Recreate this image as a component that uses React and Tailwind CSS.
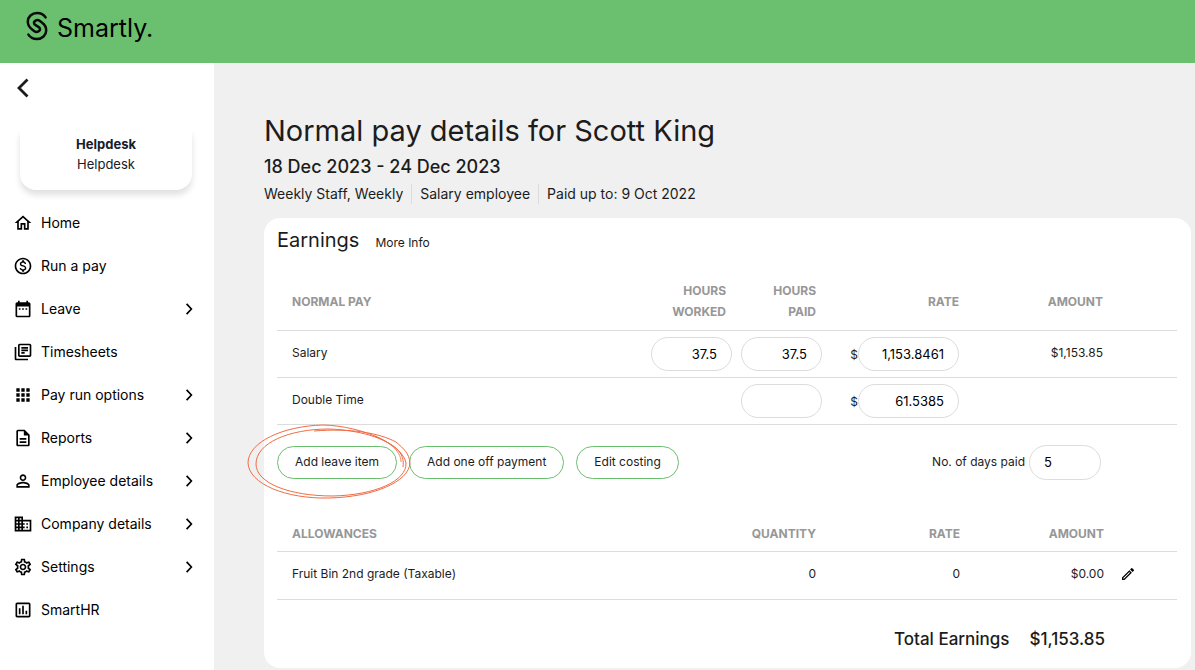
import React, { useState } from 'react'
import {
    MdOutlineHome,
    MdOutlineMonetizationOn,
    MdDateRange,
    MdOutlineLibraryBooks,
    MdApps,
    MdOutlineDescription,
    MdPersonOutline,
    MdDomain,
    MdOutlineSettings,
    MdOutlineAssessment,
    MdOutlineModeEdit,
} from 'react-icons/md'

const menu = [
    { label: 'Home', icon: MdOutlineHome },
    { label: 'Run a pay', icon: MdOutlineMonetizationOn },
    { label: 'Leave', icon: MdDateRange, sub: true },
    { label: 'Timesheets', icon: MdOutlineLibraryBooks },
    { label: 'Pay run options', icon: MdApps, sub: true },
    { label: 'Reports', icon: MdOutlineDescription, sub: true },
    { label: 'Employee details', icon: MdPersonOutline, sub: true },
    { label: 'Company details', icon: MdDomain, sub: true },
    { label: 'Settings', icon: MdOutlineSettings, sub: true },
    { label: 'SmartHR', icon: MdOutlineAssessment },
]

const Logo = () => (
    <svg className="h-8 w-6" viewBox="0 0 24 32" fill="none" stroke="#0a0a0a" strokeWidth="2.5" strokeLinecap="round" strokeLinejoin="round">
        <path d="M20.6 7.4C18.8 4.6 15.6 3 12.2 3C6.8 3 2.8 6.8 2.8 11.6C2.8 14.8 4.4 17.4 6.8 19.2L9.4 21.2C12 23 15.8 20.8 14.8 18.2C14.4 17.2 13 16.6 12 16" />
        <path d="M3.4 24.6C5.2 27.4 8.4 29 11.8 29C17.2 29 21.2 25.2 21.2 20.4C21.2 17.2 19.6 14.6 17.2 12.8L14.6 10.8C12 9 8.2 11.2 9.2 13.8C9.6 14.8 11 15.4 12 16" />
    </svg>
)

const Chevron = ({ className, d }) => (
    <svg className={className} viewBox="0 0 12 20" fill="none" stroke="currentColor" strokeWidth="2.8">
        <path d={d} />
    </svg>
)

const Sidebar = () => (
    <aside className="w-[214px] shrink-0 bg-white px-[13px] pt-[15px]">
        <button aria-label="Back" className="block px-1">
            <Chevron className="h-5 w-3" d="M10.5 1.5L2 10L10.5 18.5" />
        </button>

        {/* Company card */}
        <div className="mr-[9px] ml-[7px] mt-8 rounded-b-2xl pt-1 pb-4 text-center text-[13px] leading-5 text-[#14202b] shadow-[0_5px_6px_rgba(0,0,0,0.12)]">
            <p className="font-bold">Helpdesk</p>
            <p>Helpdesk</p>
        </div>

        <nav className="mt-[11px]">
            {menu.map(({ label, icon: Icon, sub }) => (
                <a key={label} href="#" className="flex h-[43px] items-center text-sm text-black">
                    <Icon className="h-5 w-5" />
                    <span className="ml-2 flex-1">{label}</span>
                    {sub && <Chevron className="mr-2 h-3 w-2" d="M2 1.5L10 10L2 18.5" />}
                </a>
            ))}
        </nav>
    </aside>
)

const Cell = ({ label, value, className }) => {
    const [text, setText] = useState(value)

    return (
        <input
            aria-label={label}
            value={text}
            onChange={(e) => setText(e.target.value)}
            className={`h-[34px] rounded-full border border-[#dcdcdc] bg-white text-[13px] text-black outline-none ${className}`}
        />
    )
}

const PillButton = ({ children }) => (
    <button className="h-[33px] rounded-full border border-[#6abf6e] px-[17px] text-xs text-[#1c1c1c]">{children}</button>
)

/* Pen marking round the leave button */
const Scribble = () => (
    <svg className="pointer-events-none absolute -left-[30px] -top-[22px] h-[76px] w-[166px]" viewBox="0 0 166 76" fill="none" stroke="#ef6c45" strokeWidth="1">
        <path d="M156 43C157 36 155 30 150 25C138 14 112 6 82 5C42 5 9 19 9 40C9 59 42 72 86 72C128 71 160 57 159 39C156 21 116 2 76 1C36 2 1 18 1 39C2 60 39 75 82 74C126 73 162 58 163 39C162 29 157 25 149 18C132 9 104 4 67 7" />
        <path d="M128 12C140 17 154 26 154 38" strokeWidth="0.8" />
    </svg>
)

const Earnings = () => (
    <table className="w-full table-fixed text-xs text-[#1c1c1c]">
        <colgroup>
            <col />
            <col className="w-[90px]" />
            <col className="w-[90px]" />
            <col className="w-[142px]" />
            <col className="w-[144px]" />
            <col className="w-[65px]" />
        </colgroup>
        <thead className="leading-[21px] text-[#979797]">
            <tr className="h-[59px] border-b border-[#dcdcdc] text-right">
                <th className="pl-[15px] pt-[2px] text-left">NORMAL PAY</th>
                <th className="pr-[10px] pl-4 pt-[2px]">HOURS WORKED</th>
                <th className="pr-[10px] pl-8 pt-[2px]">HOURS PAID</th>
                <th className="pr-[9px] pt-[2px]">RATE</th>
                <th className="pr-[9px] pt-[2px]">AMOUNT</th>
                <th></th>
            </tr>
        </thead>
        <tbody>
            <tr className="h-[47px] border-b border-[#dcdcdc] text-right">
                <td className="pl-[15px] pb-[2px] text-left">Salary</td>
                <td className="pr-1"><Cell label="Salary hours worked" value="37.5" className="w-[81px] pr-[14px] text-right" /></td>
                <td className="pr-1"><Cell label="Salary hours paid" value="37.5" className="w-[81px] pr-[14px] text-right" /></td>
                <td className="pr-[9px]">$<Cell label="Salary rate" value="1,153.8461" className="w-[101px] pr-[14px] text-right" /></td>
                <td className="pr-[9px] pb-[2px]">$1,153.85</td>
                <td></td>
            </tr>
            <tr className="h-[47px] border-b border-[#dcdcdc] text-right">
                <td className="pl-[15px] pb-[2px] text-left">Double Time</td>
                <td></td>
                <td className="pr-1"><Cell label="Double time hours paid" value="" className="w-[81px] pr-[14px] text-right" /></td>
                <td className="pr-[9px]">$<Cell label="Double time rate" value="61.5385" className="w-[101px] pr-[14px] text-right" /></td>
                <td></td>
                <td></td>
            </tr>
        </tbody>
    </table>
)

const Allowances = () => (
    <table className="w-full table-fixed text-xs text-[#1c1c1c]">
        <colgroup>
            <col />
            <col className="w-[90px]" />
            <col className="w-[144px]" />
            <col className="w-[144px]" />
            <col className="w-[65px]" />
        </colgroup>
        <thead className="text-[#979797]">
            <tr className="h-9 border-b border-[#dcdcdc] text-right">
                <th className="pl-[15px] pt-[2px] text-left">ALLOWANCES</th>
                <th className="pr-2 pt-[2px]">QUANTITY</th>
                <th className="pr-2 pt-[2px]">RATE</th>
                <th className="pr-2 pt-[2px]">AMOUNT</th>
                <th></th>
            </tr>
        </thead>
        <tbody>
            <tr className="h-12 border-b border-[#dcdcdc] text-right">
                <td className="pl-[15px] pb-1 text-left">Fruit Bin 2nd grade (Taxable)</td>
                <td className="pr-2 pb-1">0</td>
                <td className="pr-2 pb-1">0</td>
                <td className="pr-2 pb-1">$0.00</td>
                <td className="pl-2 pb-1 text-left">
                    <button aria-label="Edit allowance" className="block text-black">
                        <MdOutlineModeEdit className="h-4 w-4" />
                    </button>
                </td>
            </tr>
        </tbody>
    </table>
)

const App = () => {
    const [days, setDays] = useState('5')

    return (
        <div className="flex min-h-screen flex-col bg-[#f0f0f0] font-['Inter',sans-serif] text-[#1c1c1c]">
            <header className="flex h-[63px] items-start gap-2 bg-[#6bc06f] px-[25px] pt-[10px] text-black">
                <Logo />
                <span className="text-[25px] leading-9">Smartly.</span>
            </header>

            <div className="flex flex-1">
                <Sidebar />

                <main className="min-w-0 flex-1 pt-12 pr-1 pb-[2px] pl-[50px]">
                    <h1 className="text-[29px] leading-10">Normal pay details for Scott King</h1>
                    <h2 className="text-lg leading-8 font-medium">18 Dec 2023 - 24 Dec 2023</h2>
                    <ul className="mt-px flex divide-x divide-[#dcdcdc] text-sm leading-5">
                        <li className="pr-2">Weekly Staff, Weekly</li>
                        <li className="px-2">Salary employee</li>
                        <li className="pl-2">Paid up to: 9 Oct 2022</li>
                    </ul>

                    <section className="mt-[14px] rounded-2xl bg-white pt-2 pr-[14px] pl-[13px]">
                        <div className="flex items-baseline gap-4">
                            <h3 className="text-xl leading-7">Earnings</h3>
                            <a href="#" className="text-xs">More Info</a>
                        </div>

                        <div className="mt-[17px]">
                            <Earnings />
                        </div>

                        <div className="mt-5 flex items-center">
                            <div className="relative mr-3">
                                <PillButton>Add leave item</PillButton>
                                <Scribble />
                            </div>
                            <div className="flex flex-1 gap-3">
                                <PillButton>Add one off payment</PillButton>
                                <PillButton>Edit costing</PillButton>
                            </div>
                            <label htmlFor="days" className="mr-1 text-xs">No. of days paid</label>
                            <input
                                id="days"
                                value={days}
                                onChange={(e) => setDays(e.target.value)}
                                className="mr-[76px] h-[35px] w-[72px] rounded-full border border-[#dcdcdc] px-[14px] text-[13px] text-black outline-none"
                            />
                        </div>

                        <div className="mt-9">
                            <Allowances />
                        </div>

                        <p className="flex justify-end gap-5 pt-[25px] pr-[72px] pb-[15px] text-[17px] leading-7 font-medium">
                            <span>Total Earnings</span>
                            <span>$1,153.85</span>
                        </p>
                    </section>
                </main>
            </div>
        </div>
    )
}

export default App
